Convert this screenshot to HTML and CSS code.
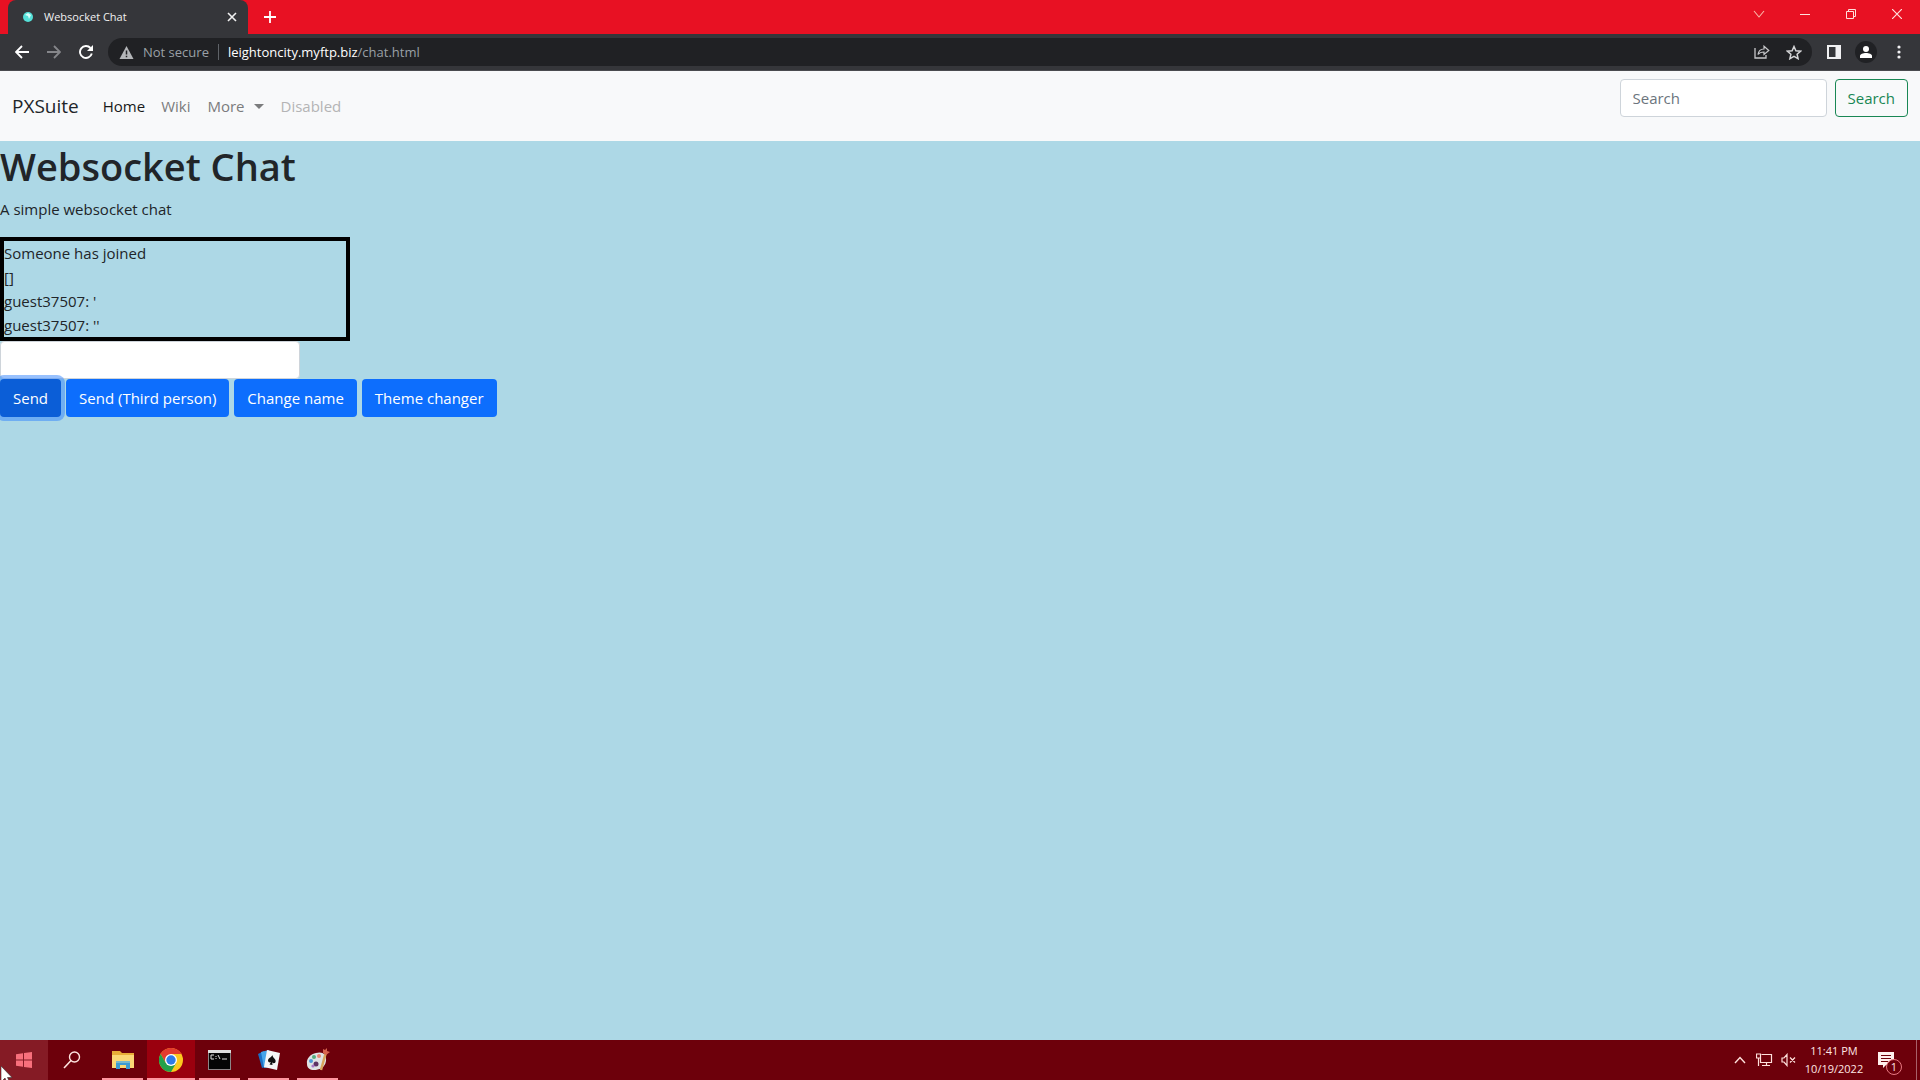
FILE: index.html
```html
<!DOCTYPE html>
<html lang="en">
<head>
<meta charset="utf-8">
<title>Websocket Chat</title>
<link rel="stylesheet" href="styles.css">
</head>
<body>
<header class="browser">
  <div class="tabstrip">
    <div class="tab">
      <svg class="favicon" width="10" height="10" viewBox="0 0 10 10"><circle cx="5" cy="5" r="5" fill="#55e0d8"/><path d="M2 3l3 1 1 3 2-4-3-2z" fill="#d8fffa"/></svg>
      <span class="tab-title">Websocket Chat</span>
      <button class="icon-btn tab-close" aria-label="Close tab"><svg width="10" height="10" viewBox="0 0 10 10"><path d="M1 1l8 8M9 1l-8 8" stroke="#f1f1f1" stroke-width="1.6"/></svg></button>
    </div>
    <button class="icon-btn new-tab" aria-label="New tab"><svg width="12" height="12" viewBox="0 0 12 12"><path d="M6 0v12M0 6h12" stroke="#fff" stroke-width="1.8"/></svg></button>
    <div class="window-controls">
      <button class="icon-btn" aria-label="Search tabs"><svg width="12" height="12" viewBox="0 0 12 12"><path d="M1 3l5 6 5-6" fill="none" stroke="#f9b8a8" stroke-width="1.1"/></svg></button>
      <button class="icon-btn" aria-label="Minimize"><svg width="10" height="10" viewBox="0 0 10 10"><path d="M0 5.500h10" stroke="#ffe0dc"/></svg></button>
      <button class="icon-btn" aria-label="Restore"><svg width="10" height="10" viewBox="0 0 10 10"><path d="M.5 2.500h7v7h-7zM2.500 2.500v-2h7v7h-2" fill="none" stroke="#ffe0dc"/></svg></button>
      <button class="icon-btn" aria-label="Close"><svg width="10" height="10" viewBox="0 0 10 10"><path d="M0 0l10 10M10 0L0 10" stroke="#ffe0dc" stroke-width="1.2"/></svg></button>
    </div>
  </div>
  <div class="toolbar">
    <button class="icon-btn nav-btn" aria-label="Back"><svg width="14" height="14" viewBox="0 0 14 14"><path d="M14 7H1.500M7 1L1 7l6 6" fill="none" stroke="#fff" stroke-width="1.8"/></svg></button>
    <button class="icon-btn nav-btn" aria-label="Forward"><svg width="14" height="14" viewBox="0 0 14 14"><path d="M0 7h12.500M7 1l6 6-6 6" fill="none" stroke="#85868a" stroke-width="1.8"/></svg></button>
    <button class="icon-btn nav-btn" aria-label="Reload"><svg width="14" height="14" viewBox="0 0 14 14"><path d="M12.800 8.500A6 6 0 1 1 11.500 3" fill="none" stroke="#fff" stroke-width="1.9"/><path d="M14 0v6H8z" fill="#fff"/></svg></button>
    <div class="address">
      <svg width="15" height="13" viewBox="0 0 14 13"><path d="M7 0l7 13H0z" fill="#b4b6b9"/><path d="M7 4.500v4M7 9.700v1.500" stroke="#202124" stroke-width="1.500"/></svg>
      <span class="secure">Not secure</span>
      <span class="divider"></span>
      <span class="url"><span class="host">leightoncity.myftp.biz</span>/chat.html</span>
      <button class="icon-btn share" aria-label="Share"><svg width="16" height="14" viewBox="0 0 16 14"><path d="M1 3v10h11v-3" fill="none" stroke="#c6c7c9" stroke-width="1.300"/><path d="M4 9.500C4.500 6 7 4 10 4V1.200L14.800 5.500 10 9.500V7C7.500 7 5.500 7.500 4 9.500z" fill="none" stroke="#c6c7c9" stroke-width="1.200"/></svg></button>
      <button class="icon-btn star" aria-label="Bookmark"><svg width="16" height="15" viewBox="0 0 16 15"><path d="M8 1.500l1.900 4.200 4.600.5-3.400 3 1 4.500L8 11.400l-4.100 2.300 1-4.500-3.400-3 4.600-.5z" fill="none" stroke="#d4d5d7" stroke-width="1.500"/></svg></button>
    </div>
    <div class="tools">
      <button class="icon-btn" aria-label="Side panel"><svg width="14" height="14" viewBox="0 0 14 14"><path d="M0 0h14v14H0zM2 2v10h6.500V2z" fill="#f1f1f3" fill-rule="evenodd"/></svg></button>
      <button class="icon-btn avatar" aria-label="Profile"><svg width="12" height="12" viewBox="0 0 12 12"><circle cx="6" cy="3" r="3" fill="#fff"/><path d="M0 12V10c0-2 3-3 6-3s6 1 6 3v2z" fill="#fff"/></svg></button>
      <button class="icon-btn" aria-label="Menu"><svg width="4" height="14" viewBox="0 0 4 14"><g fill="#f1f1f3"><circle cx="2" cy="2" r="1.600"/><circle cx="2" cy="7" r="1.600"/><circle cx="2" cy="12" r="1.600"/></g></svg></button>
    </div>
  </div>
</header>
<nav class="navbar">
  <a class="brand" href="#">PXSuite</a>
  <div class="links">
    <a class="link active" href="#">Home</a>
    <a class="link" href="#">Wiki</a>
    <a class="link more" href="#">More<span class="caret"></span></a>
    <a class="link disabled" href="#" aria-disabled="true">Disabled</a>
  </div>
  <form class="search">
    <input class="field" type="search" placeholder="Search" aria-label="Search">
    <button class="btn outline" type="button">Search</button>
  </form>
</nav>
<main class="page">
  <h1 class="title">Websocket Chat</h1>
  <p class="lead">A simple websocket chat</p>
  <div class="log">
    <div>Someone has joined</div>
    <div>[]</div>
    <div>guest37507: '</div>
    <div>guest37507: ''</div>
  </div>
  <input class="message" type="text" aria-label="Message">
  <div class="actions">
    <button class="btn primary focused" type="button">Send</button>
    <button class="btn primary" type="button">Send (Third person)</button>
    <button class="btn primary" type="button">Change name</button>
    <button class="btn primary" type="button">Theme changer</button>
  </div>
</main>
<footer class="taskbar">
  <button class="task start" aria-label="Start"><svg width="16" height="16" viewBox="0 0 16 16"><path d="M0 2.200L7 1.200v6.300H0zM8 1.100L16 0v7.500H8zM0 8.500h7v6.300L0 13.800zM8 8.500h8V16L8 14.900z" fill="#f8707c"/></svg></button>
  <button class="task" aria-label="Search"><svg width="18" height="18" viewBox="0 0 18 18"><circle cx="11.500" cy="6" r="5" fill="none" stroke="#ffe4e0" stroke-width="1.400"/><path d="M8 9.500L1 17" stroke="#ffe4e0" stroke-width="1.600"/></svg></button>
  <button class="task open first" aria-label="File Explorer"><svg width="22" height="18" viewBox="0 0 22 18"><path d="M0 0h8l2 2h12v15H0z" fill="#e9ae38"/><path d="M0 4h22v13H0z" fill="#fbd876"/><path d="M4 18v-8h14v8h-4v-4H8v4z" fill="#3c9bd3"/><path d="M4 10h14v2H4z" fill="#76b8cf"/></svg></button>
  <button class="task current" aria-label="Chrome"><svg width="24" height="24" viewBox="0 0 24 24"><circle cx="12" cy="12" r="12" fill="#fbc91f"/><path d="M1.600 6A12 12 0 0 1 22.400 6H12l-5.200 9z" fill="#e33b2e"/><path d="M1.600 6A12 12 0 0 0 12 24l5.200-9H6.800z" fill="#24a04b"/><circle cx="12" cy="12" r="6" fill="#fff"/><circle cx="12" cy="12" r="4.700" fill="#2d7be8"/></svg></button>
  <button class="task open" aria-label="Command Prompt"><svg width="23" height="20" viewBox="0 0 23 20"><path d="M0 0h23v20H0z" fill="#8c8587"/><path d="M0 0h23v3H0z" fill="#dedede"/><path d="M1 3h21v16H1z" fill="#050505"/><path d="M6 5H3v4h3M8 6v1M8 8v1M10 5l2 4M14 9h5" fill="none" stroke="#ddd"/></svg></button>
  <button class="task open" aria-label="Solitaire"><svg width="22" height="20" viewBox="0 0 22 20"><path d="M0 4l6-3 4 15-6 2z" fill="#1c6fc4"/><path d="M3 2l8-2 2 17-7 1z" fill="#46a5ea"/><path d="M9 0l13 3-3 17-13-3z" fill="#f6f6f6"/><path d="M14.500 5c0 3 4 4 3 7-.5 1.500-2.500 1.500-3.300.3l.3 2.700-3-.6 1.500-2.300c-1.300.8-3 0-3-1.600 0-2.500 3.500-3 4.500-5.500z" fill="#111"/></svg></button>
  <button class="task open" aria-label="Paint"><svg width="24" height="24" viewBox="0 0 24 24"><path d="M10 5c6-2 11 1 10 8s-7 9-12 9c-4 0-7-2-7-6C0 10 5 6 10 5z" fill="#dfe3e4"/><circle cx="5" cy="13" r="2" fill="#4d9bd8"/><circle cx="8" cy="9" r="2" fill="#54ad7f"/><circle cx="13" cy="8" r="2" fill="#e88776"/><circle cx="10" cy="16" r="2.500" fill="#5c3262"/><circle cx="7" cy="18" r="1.600" fill="#a878c8"/><path d="M20 4l-5 18" stroke="#d8a55c" stroke-width="2.500"/><path d="M17 1l2 1 2-2v3l3 1-4 3-3-2z" fill="#d8644e"/></svg></button>
  <div class="tray">
    <svg width="12" height="8" viewBox="0 0 12 8"><path d="M1 7l5-5.500L11 7" fill="none" stroke="#ffe0dc" stroke-width="1.400"/></svg>
    <svg width="17" height="14" viewBox="0 0 17 14"><path d="M5.500 1.500h10v8h-11v-4M10.500 9.500v3M6 12.500h8M.5 1h4v4h-4zM2.500 5v8" fill="none" stroke="#ffe0dc" stroke-width="1.200"/></svg>
    <svg width="15" height="14" viewBox="0 0 15 14"><path d="M1 5h2l3-3.500v11L3 9H1zM9 4.500l5 5M14 4.500l-5 5" fill="none" stroke="#ffe0dc" stroke-width="1.200"/></svg>
    <div class="clock"><div>11:41 PM</div><div>10/19/2022</div></div>
    <div class="notice">
      <svg width="16" height="16" viewBox="0 0 16 16"><path d="M0 0h16v13H8l-3 3v-3H0z" fill="#fff0ee"/><path d="M3 3.500h10M3 6.500h10M3 9.500h7" stroke="#6d000b" stroke-width="1.200"/></svg>
      <span class="count">1</span>
    </div>
    <span class="desktop"></span>
  </div>
  <svg class="pointer" width="12" height="17" viewBox="0 0 12 17"><path d="M0 0l11 11.500H6.500L9 17H6L4 12l-4 4z" fill="#fff" stroke="#333" stroke-width=".6"/></svg>
</footer>
</body>
</html>
```
FILE: styles.css
```css
* { box-sizing: border-box; }

body {
  margin: 0;
  min-height: 100vh;
  display: flex;
  flex-direction: column;
  background: #add8e6;
  color: #212529;
  font: 15px/24px "Segoe UI", "Open Sans", "Noto Sans", sans-serif;
}

button, input { font: inherit; }
a { color: inherit; text-decoration: none; }
svg { display: block; flex: none; }

.icon-btn {
  display: flex;
  align-items: center;
  justify-content: center;
  padding: 0;
  border: 0;
  background: none;
}

/* Browser window */
.tabstrip {
  display: flex;
  height: 34px;
  padding-left: 8px;
  background: #e81123;
}
.tab {
  display: flex;
  align-items: center;
  width: 240px;
  padding: 0 11px 0 15px;
  border-radius: 8px 8px 0 0;
  background: #35363a;
  color: #f1f1f1;
}
.tab-title { flex: 1; padding-left: 11px; font-size: 11px; }
.new-tab { width: 44px; }
.window-controls {
  display: flex;
  margin-left: auto;
  height: 28px;
}
.window-controls .icon-btn { width: 46px; }

.toolbar {
  display: flex;
  align-items: center;
  height: 37px;
  padding: 0 11px 0 6px;
  background: #35363a;
  border-bottom: 1px solid #4a4b4f;
}
.nav-btn { width: 32px; height: 28px; }
.address {
  display: flex;
  flex: 1;
  align-items: center;
  height: 28px;
  margin-left: 6px;
  padding: 0 10px 0 11px;
  border-radius: 14px;
  background: #202124;
  color: #9aa0a6;
  font-size: 13px;
}
.secure { padding-left: 9px; }
.divider { width: 1px; height: 16px; margin: 0 9px; background: #5f6368; }
.host { color: #fff; }
.share { margin-left: auto; }
.star { margin-left: 16px; }
.tools { display: flex; align-items: center; gap: 14px; margin-left: 15px; }
.tools .icon-btn:last-child { width: 20px; margin-left: -2px; }
.avatar { width: 22px; height: 22px; border-radius: 11px; background: #202124; }

/* Site navigation */
.navbar {
  display: flex;
  align-items: center;
  padding: 8px 12px;
  background: #f8f9fa;
}
.brand { margin-right: 16px; font-size: 19px; line-height: 30px; }
.links { display: flex; }
.link { padding: 8px; color: #7b7c7d; }
.link.active { color: #191919; }
.link.disabled { color: #b4b4b5; }
.link.more { padding: 8px 9px; }
.caret {
  display: inline-block;
  margin-left: 9px;
  vertical-align: 3px;
  border: 5px solid transparent;
  border-top-color: currentColor;
  border-bottom: 0;
}
.search { display: flex; gap: 8px; margin: 0 0 16px auto; }
.field {
  width: 207px;
  height: 38px;
  padding: 6px 12px;
  border: 1px solid #ced4da;
  border-radius: 4px;
  background: #fff;
}
.field::placeholder { color: #6c757d; }

.btn {
  height: 38px;
  padding: 6px 12px;
  border: 1px solid transparent;
  border-radius: 4px;
}
.btn.outline { border-color: #198754; background: transparent; color: #198754; }
.btn.primary { background: #0d6efd; color: #fff; }
.btn.focused { background: #0b5ed7; box-shadow: 0 0 0 4px rgba(49, 132, 253, .5); }

/* Chat page */
.page { flex: 1; }
.title { margin: 0 0 6px; font-size: 38px; line-height: 50px; font-weight: 600; }
.lead { margin: 0 0 16px; }
.log { width: 350px; border: 4px solid #000; }
.message {
  display: block;
  width: 300px;
  height: 38px;
  padding: 6px 12px;
  border: 1px solid #ced4da;
  border-radius: 4px;
  background: #fff;
}
.actions { display: flex; gap: 5px; }

/* Windows taskbar */
.taskbar {
  position: relative;
  display: flex;
  height: 40px;
  background: #6d000b;
  overflow: hidden;
}
.task {
  display: flex;
  align-items: center;
  justify-content: center;
  width: 48px;
  padding: 0;
  border: 0;
  background: none;
}
.task.start { background: #851b25; }
.task.current { background: #9a000e; border-bottom: 2px solid #ff96a0; border-top: 2px solid transparent; }
.task.open {
  width: 41px;
  margin: 0 4px;
  border-top: 2px solid transparent;
  border-bottom: 2px solid #ff96a0;
}
.task.first { margin-left: 6px; }
.tray {
  display: flex;
  align-items: center;
  gap: 8px;
  margin-left: auto;
  color: #ffe6e4;
}
.tray > svg:first-child { margin-right: 2px; }
.clock { width: 60px; text-align: center; font-size: 11px; line-height: 18px; }
.notice { position: relative; margin: 0 14px 0 6px; }
.count {
  position: absolute;
  left: 8px;
  top: 7px;
  width: 16px;
  height: 16px;
  border: 1px solid #e87882;
  border-radius: 8px;
  background: #6d000b;
  font-size: 11px;
  line-height: 14px;
  text-align: center;
}
.desktop { width: 4px; height: 40px; border-left: 1px solid #a8606a; }
.pointer { position: absolute; left: 1px; top: 26px; }
```
